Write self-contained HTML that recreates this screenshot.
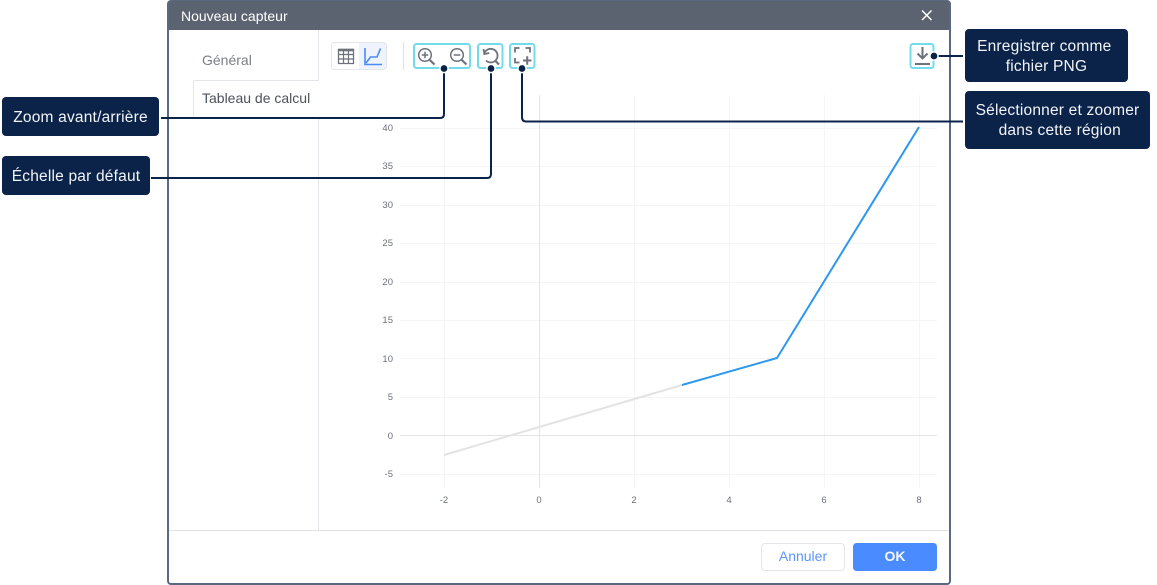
<!DOCTYPE html>
<html lang="fr">
<head>
<meta charset="utf-8">
<style>
html,body{margin:0;padding:0;background:#fff}
body{width:1157px;height:585px;position:relative;overflow:hidden;font-family:"Liberation Sans",sans-serif}
svg{position:absolute;left:0;top:0}
.t{position:absolute;white-space:nowrap}
.c{position:absolute;background:#0b2349;border-radius:4px;color:#f2f4f7;font-size:15.5px;letter-spacing:.2px;text-align:center;line-height:19.5px;white-space:nowrap}
.ax{position:absolute;font-size:9.5px;color:#6b7078;white-space:nowrap;line-height:11px}
.y{text-align:right;width:30px;left:363px}
.x{text-align:center;width:30px;top:495px}
</style>
</head>
<body>
<svg width="1157" height="585" viewBox="0 0 1157 585" fill="none">
  <!-- dialog -->
  <rect x="168" y="1" width="782" height="583" rx="3" fill="#fff" stroke="#5a6882" stroke-width="2"/>
  <path d="M169 30V3Q169 1 171 1H947Q949 1 949 3V30Z" fill="#5b6370"/>
  <path d="M922 10.500l9.500 9.500M931.500 10.500l-9.500 9.500" stroke="#fff" stroke-width="1.500"/>
  <!-- tabs -->
  <path d="M318.500 30V80.500H195Q193.500 80.500 193.500 82V116.500Q193.500 118.500 195.500 118.500H318.500V530" stroke="#e4e5e8"/>
  <rect x="319" y="81" width="1" height="37" fill="#fff"/>
  <path d="M169 530.500H949" stroke="#e1e2e5"/>
  <!-- toggle -->
  <path d="M359 42.500H384Q386.500 42.500 386.500 45V67Q386.500 69.500 384 69.500H359Z" fill="#eef3fd"/>
  <rect x="331.500" y="42.500" width="55" height="27" rx="3.500" stroke="#e3e5e9"/>
  <path d="M338.500 49.500h15v14h-15z" stroke="#6d727b" stroke-width="1.300"/>
  <path d="M338 50h16" stroke="#6d727b" stroke-width="2.600"/>
  <path d="M338 54.500h16M338 59h16M343.500 50v14M348.500 50v14" stroke="#6d727b" stroke-width="1.200"/>
  <path d="M365 48V64.500H382" stroke="#4a8cf7" stroke-width="1.600"/>
  <path d="M366 63L370.500 57H377L380.500 48.500" stroke="#4a8cf7" stroke-width="1.600"/>
  <path d="M403.500 42V70" stroke="#e1e2e5"/>
  <!-- grid -->
  <g stroke="#f5f5f6">
    <path d="M400 128.500H937M400 166.500H937M400 205.500H937M400 243.500H937M400 282.500H937M400 320.500H937M400 358.500H937M400 397.500H937M400 474.500H937"/>
    <path d="M444.500 95V488M634.500 95V488M729.500 95V488M824.500 95V488M919.500 95V488"/>
  </g>
  <path d="M400 435.500H937M539.500 95V488" stroke="#e4e4e6"/>
  <path d="M444 455L682 385" stroke="#e3e3e3" stroke-width="2"/>
  <path d="M682 385L777 358L919 127" stroke="#2c98ee" stroke-width="2" stroke-linejoin="round"/>
  <!-- highlight boxes -->
  <g stroke="#72dceb" stroke-width="2">
    <rect x="414" y="44" width="56" height="24" rx="2.500"/>
    <rect x="478" y="44" width="24.500" height="24" rx="2.500"/>
    <rect x="510" y="44" width="24.500" height="24" rx="2.500"/>
    <rect x="910.500" y="44" width="23" height="24" rx="2.500"/>
  </g>
  <!-- icons -->
  <g stroke="#6d727b" stroke-width="1.500">
    <circle cx="425" cy="55" r="6.300"/>
    <path d="M421.700 55h6.600M425 51.700v6.600"/>
    <path d="M429.800 60L434.500 64.500" stroke-width="2.200"/>
    <circle cx="457" cy="55" r="6.300"/>
    <path d="M453.700 55h6.600"/>
    <path d="M461.800 60L466.500 64.500" stroke-width="2.200"/>
    <!-- reset -->
    <path d="M484.300 53.500A6.800 6.800 0 1 1 486 60.500" stroke-width="1.800"/>
    <path d="M483.500 49L484.300 54L489.300 53" stroke-width="1.800"/>
    <path d="M495 60.500L499 64.500" stroke-width="2.200"/>
    <!-- select zoom -->
    <path d="M515 52.500v-4.500h4.500M525.500 48h4.500v4.500M515 58v4.500h4.500" stroke-width="1.800"/>
    <path d="M523 60.500h8.500M527.200 56.300v8.500" stroke-width="2"/>
    <!-- download -->
    <path d="M922.500 47v11.500M917.500 53.500l5 5l5-5" stroke-width="2"/>
    <path d="M915 64h15" stroke-width="2"/>
  </g>
  <!-- connectors -->
  <g stroke="#0b2349" stroke-width="2">
    <path d="M161 118H440Q444 118 444 114V70"/>
    <path d="M151 178H487Q491 178 491 174V70"/>
    <path d="M522 70V117Q522 121.500 526 121.500H963"/>
    <path d="M936 56H963"/>
  </g>
  <g fill="#0b2349" stroke="#fff" stroke-width="1.500">
    <circle cx="444" cy="68.500" r="4.100"/>
    <circle cx="491" cy="68.500" r="4.100"/>
    <circle cx="522" cy="68.500" r="4.100"/>
    <circle cx="934" cy="56" r="4.100"/>
  </g>
  <!-- footer buttons -->
  <rect x="761.500" y="543.500" width="83" height="27" rx="3.500" fill="#fff" stroke="#e3e5e9"/>
  <rect x="853" y="543" width="84" height="28" rx="3.500" fill="#4a8cff"/>
</svg>

<div class="t" style="left:181px;top:8px;font-size:14px;line-height:16px;color:#fff">Nouveau capteur</div>
<div class="t" style="left:202px;top:52px;font-size:14px;line-height:16px;color:#7b8087">Général</div>
<div class="t" style="left:202px;top:90px;font-size:14px;line-height:16px;color:#4d525a">Tableau de calcul</div>

<div class="ax y" style="top:123px">40</div>
<div class="ax y" style="top:161px">35</div>
<div class="ax y" style="top:200px">30</div>
<div class="ax y" style="top:238px">25</div>
<div class="ax y" style="top:277px">20</div>
<div class="ax y" style="top:315px">15</div>
<div class="ax y" style="top:354px">10</div>
<div class="ax y" style="top:392px">5</div>
<div class="ax y" style="top:431px">0</div>
<div class="ax y" style="top:469px">-5</div>
<div class="ax x" style="left:429px">-2</div>
<div class="ax x" style="left:524px">0</div>
<div class="ax x" style="left:619px">2</div>
<div class="ax x" style="left:714px">4</div>
<div class="ax x" style="left:809px">6</div>
<div class="ax x" style="left:904px">8</div>

<div class="t" style="left:761px;top:548px;width:84px;text-align:center;font-size:14px;line-height:16px;color:#5b95ff">Annuler</div>
<div class="t" style="left:853px;top:548px;width:84px;text-align:center;font-size:14px;line-height:16px;font-weight:bold;color:#f4f7ff">OK</div>

<div class="c" style="left:2px;top:97px;width:157px;height:39px;line-height:41px">Zoom avant/arrière</div>
<div class="c" style="left:2px;top:156px;width:148px;height:39px;line-height:41px">Échelle par défaut</div>
<div class="c" style="left:965px;top:29px;width:163px;height:53px;padding-top:8px;box-sizing:border-box">Enregistrer comme&nbsp;<br>fichier PNG</div>
<div class="c" style="left:965px;top:91px;width:185px;height:58px;padding-top:10px;box-sizing:border-box">Sélectionner et zoomer<br>&nbsp;dans cette région</div>
</body>
</html>
